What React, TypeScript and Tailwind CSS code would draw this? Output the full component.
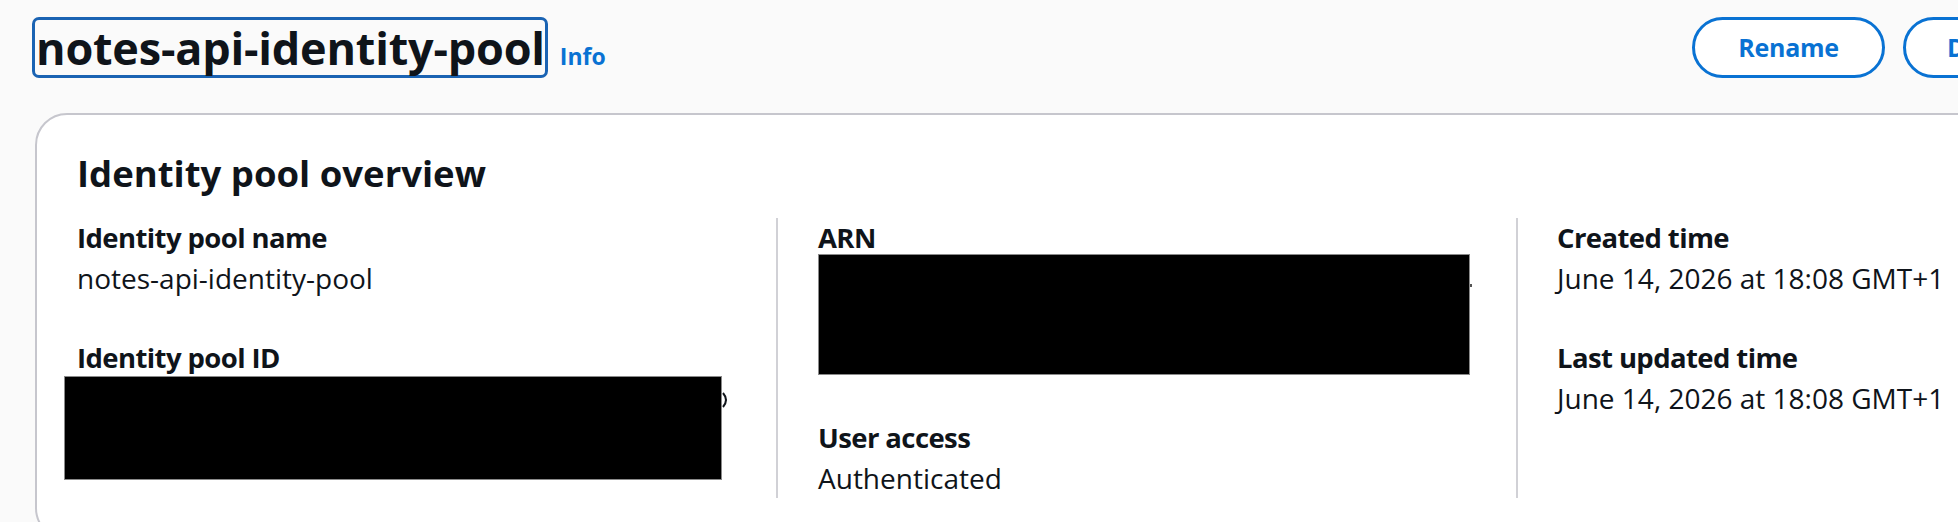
import React from "react";

function Label({ children }: { children: React.ReactNode }) {
  return <div className="text-[27.5px] leading-[40px] font-bold tracking-[-0.6px] text-[#0f141a]">{children}</div>;
}

function Value({ children }: { children: React.ReactNode }) {
  return <div className="text-[28px] leading-[40px] text-[#0f141a]">{children}</div>;
}

export default function App() {
  return (
    <div className="w-[1958px] h-[522px] overflow-hidden bg-[#fafafa] font-['Open_Sans',sans-serif] text-[#0f141a]">
      <div className="w-[2081px] pl-[32px] pt-[17px]">
        <div className="flex items-start justify-between">
          <div className="flex items-baseline gap-[12px]">
            <h1 className="border-[3px] border-[#1a63b3] rounded-[7px] pl-[1px] pr-0 text-[45px] leading-[55px] font-bold tracking-[-0.2px]">
              notes-api-identity-pool
            </h1>
            <span className="text-[23px] font-bold text-[#0972d3]">Info</span>
          </div>
          <div className="flex gap-[18px]">
            <button className="h-[61px] w-[193px] rounded-full border-[3px] border-[#0972d3] bg-white text-[25px] font-bold tracking-[-0.3px] text-[#0972d3]">
              Rename
            </button>
            <button className="h-[61px] w-[178px] rounded-full border-[3px] border-[#0972d3] bg-white pl-[41px] text-left text-[25px] font-bold tracking-[-0.3px] text-[#0972d3]">
              Delete
            </button>
          </div>
        </div>

        <div className="mt-[35px] ml-[3px] rounded-[32px] border-2 border-[#c6c6cd] bg-white pl-[40px] pt-[36px] pb-[40px]">
          <h2 className="text-[36.5px] leading-[44px] font-bold">Identity pool overview</h2>
          <div className="mt-[23px] flex">
            <div className="w-[699px] flex flex-col">
              <Label>Identity pool name</Label>
              <Value>notes-api-identity-pool</Value>
              <div className="mt-[40px]">
                <Label>Identity pool ID</Label>
                <div className="relative h-[120px]">
                  <div className="absolute left-[-13px] top-[-2px] w-[658px] h-[104px] bg-black border border-[#8a8a8a]" />
                  <svg className="absolute left-[645px] top-[14px]" width="8" height="16" viewBox="0 0 8 16">
                    <path d="M1 1 Q7 8 1 15" fill="none" stroke="#0f141a" strokeWidth="2" />
                  </svg>
                </div>
              </div>
            </div>
            <div className="w-[740px] border-l-2 border-[#d1d1d6] pl-[40px] flex flex-col">
              <Label>ARN</Label>
              <div className="relative h-[120px]">
                <div className="absolute left-0 top-[-4px] w-[652px] h-[121px] bg-black border border-[#8a8a8a]" />
                <div className="absolute left-[652px] top-[26px] w-[2px] h-[3px] bg-[#555]" />
              </div>
              <div className="mt-[40px]">
                <Label>User access</Label>
                <Value>Authenticated</Value>
              </div>
            </div>
            <div className="flex-1 border-l-2 border-[#d1d1d6] pl-[39px] flex flex-col">
              <Label>Created time</Label>
              <Value>June 14, 2026 at 18:08 GMT+1</Value>
              <div className="mt-[40px]">
                <Label>Last updated time</Label>
                <Value>June 14, 2026 at 18:08 GMT+1</Value>
              </div>
            </div>
          </div>
        </div>
      </div>
    </div>
  );
}
